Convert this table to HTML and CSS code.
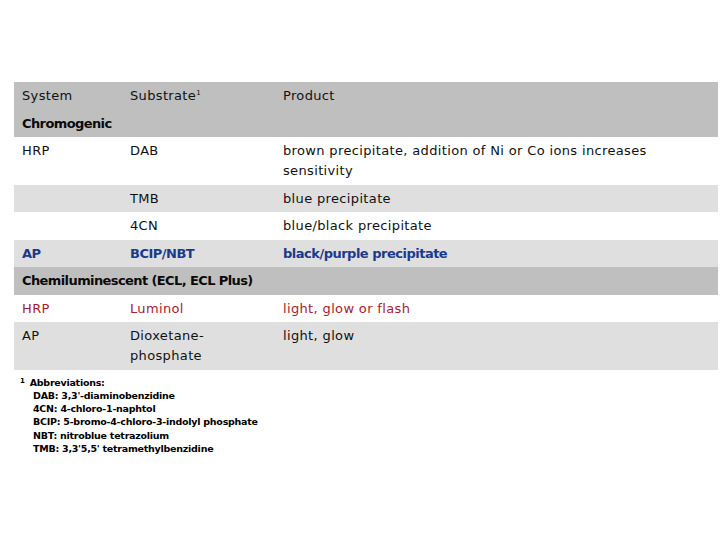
FILE: index.html
```html
<!DOCTYPE html>
<html>
<head>
<meta charset="utf-8">
<link rel="stylesheet" href="styles.css">
</head>
<body>
<div class="page">
  <table class="tbl">
    <colgroup>
      <col class="c1"><col class="c2"><col class="c3">
    </colgroup>
    <tr class="hdr">
      <td>System</td><td>Substrate<sup class="sup">1</sup></td><td>Product</td>
    </tr>
    <tr class="hdr section">
      <td colspan="3">Chromogenic</td>
    </tr>
    <tr class="white">
      <td>HRP</td><td>DAB</td><td>brown precipitate, addition of Ni or Co ions increases sensitivity</td>
    </tr>
    <tr class="light">
      <td></td><td>TMB</td><td>blue precipitate</td>
    </tr>
    <tr class="white">
      <td></td><td>4CN</td><td>blue/black precipitate</td>
    </tr>
    <tr class="light blue">
      <td>AP</td><td>BCIP/NBT</td><td>black/purple precipitate</td>
    </tr>
    <tr class="hdr section">
      <td colspan="3">Chemiluminescent (ECL, ECL Plus)</td>
    </tr>
    <tr class="white red">
      <td>HRP</td><td>Luminol</td><td>light, glow or flash</td>
    </tr>
    <tr class="light">
      <td>AP</td><td>Dioxetane-<br>phosphate</td><td>light, glow</td>
    </tr>
  </table>
  <div class="notes">
    <div class="note-head"><span class="note-num">1</span> Abbreviations:</div>
    <div class="note-line">DAB: 3,3'-diaminobenzidine</div>
    <div class="note-line">4CN: 4-chloro-1-naphtol</div>
    <div class="note-line">BCIP: 5-bromo-4-chloro-3-indolyl phosphate</div>
    <div class="note-line">NBT: nitroblue tetrazolium</div>
    <div class="note-line">TMB: 3,3'5,5' tetramethylbenzidine</div>
  </div>
</div>
</body>
</html>
```
FILE: styles.css
```css
html, body {
  margin: 0;
  padding: 0;
  background: #ffffff;
}

.page {
  padding: 82px 2px 0 14px;
  font-family: "DejaVu Sans", Verdana, sans-serif;
  color: #111111;
}

.tbl {
  width: 704px;
  border-collapse: collapse;
  border-spacing: 0;
  table-layout: fixed;
}

.c1 { width: 108px; }
.c2 { width: 153px; }
.c3 { width: 443px; }

.tbl td {
  padding: 4px 8px 3.5px 8px;
  font-size: 13px;
  line-height: 20px;
  letter-spacing: 0.35px;
  vertical-align: top;
}

.sup {
  font-size: 7px;
  vertical-align: top;
  line-height: 12px;
  position: relative;
  top: 1px;
}

.hdr { background: #bfbfbf; }
.light { background: #dfdfdf; }
.white { background: #ffffff; }

.section td {
  font-weight: bold;
  letter-spacing: -0.6px;
  color: #0a0a0a;
}

.blue td {
  color: #1b3a8c;
  font-weight: bold;
  letter-spacing: -0.5px;
}

.red td {
  color: #a81c2c;
}

.notes {
  padding: 6px 0 0 6px;
  font-family: "DejaVu Sans", sans-serif;
  font-weight: bold;
  font-size: 9.5px;
  line-height: 13.3px;
  letter-spacing: -0.25px;
  color: #000000;
}

.note-num {
  font-size: 7px;
  vertical-align: top;
  line-height: 10px;
  margin-right: 2px;
}

.note-line {
  padding-left: 13px;
}
```
